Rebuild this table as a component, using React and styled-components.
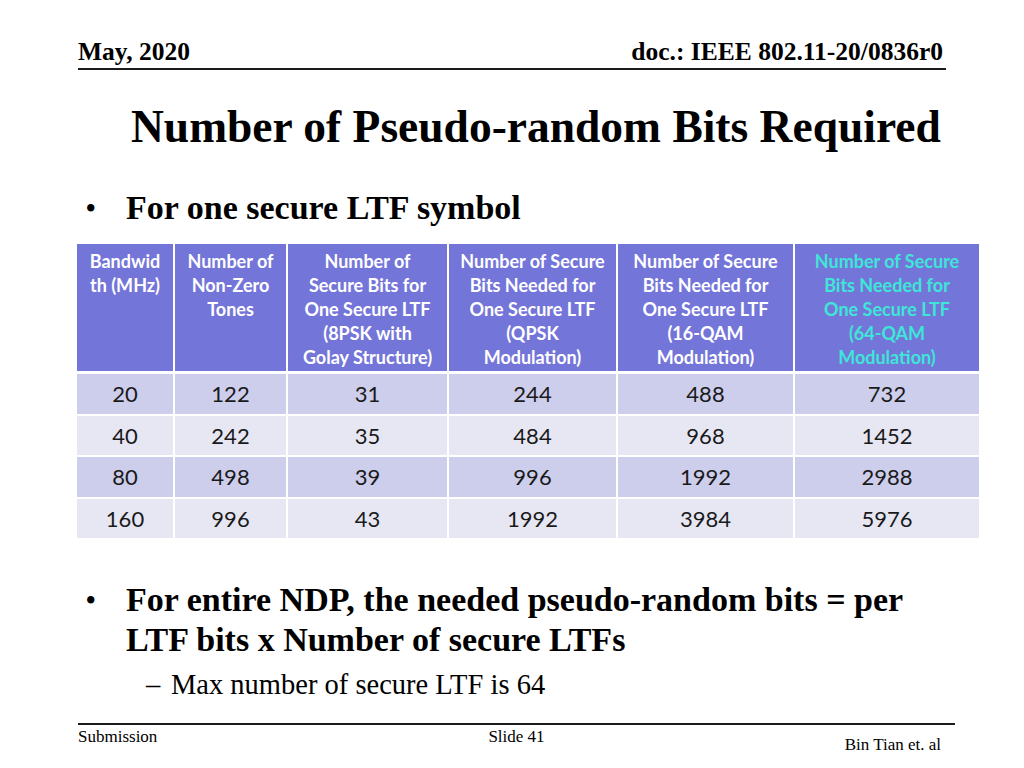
import styled, { createGlobalStyle } from 'styled-components';

const GlobalStyle = createGlobalStyle`
  html, body {
    margin: 0;
    padding: 0;
    background: #ffffff;
  }
`;

// header lines are broken by hand, as on the slide
const headers = [
  ['Bandwid', 'th (MHz)'],
  ['Number of', 'Non-Zero', 'Tones'],
  ['Number of', 'Secure Bits for', 'One Secure LTF', '(8PSK with', 'Golay Structure)'],
  ['Number of Secure', 'Bits Needed for', 'One Secure LTF', '(QPSK', 'Modulation)'],
  ['Number of Secure', 'Bits Needed for', 'One Secure LTF', '(16-QAM', 'Modulation)'],
  ['Number of Secure', 'Bits Needed for', 'One Secure LTF', '(64-QAM', 'Modulation)'],
];

const rows = [
  ['20', '122', '31', '244', '488', '732'],
  ['40', '242', '35', '484', '968', '1452'],
  ['80', '498', '39', '996', '1992', '2988'],
  ['160', '996', '43', '1992', '3984', '5976'],
];

const colWidths = [97, 113, 161, 169, 177, 185];

export default function App() {
  return (
    <>
      <GlobalStyle />
      <Slide>
        <Header>
          <HeaderText>May, 2020</HeaderText>
          <HeaderText>doc.: IEEE 802.11-20/0836r0</HeaderText>
        </Header>

        <Title>Number of Pseudo-random Bits Required</Title>

        <Bullet $top={33}>
          <Dot>•</Dot>
          <span>For one secure LTF symbol</span>
        </Bullet>

        <Table>
          <colgroup>
            {colWidths.map((w, i) => (
              <col key={i} style={{ width: w }} />
            ))}
          </colgroup>
          <thead>
            <tr>
              {headers.map((h, i) => (
                <Th key={i} $highlight={i === 5}>
                  {h.map((line, k) => (
                    <HeadLine key={k}>{line}</HeadLine>
                  ))}
                </Th>
              ))}
            </tr>
          </thead>
          <tbody>
            {rows.map((r, i) => (
              <tr key={i}>
                {r.map((c, j) => (
                  <Td key={j} $odd={i % 2 === 0}>{c}</Td>
                ))}
              </tr>
            ))}
          </tbody>
        </Table>

        <Bullet $top={40}>
          <Dot>•</Dot>
          <span>For entire NDP, the needed pseudo-random bits = per<br />LTF bits x Number of secure LTFs</span>
        </Bullet>
        <SubBullet>
          <Dash>–</Dash>
          <span>Max number of secure LTF is 64</span>
        </SubBullet>

        <Footer>
          <FooterText>Submission</FooterText>
          <FooterText>Slide 41</FooterText>
          <FooterRight>Bin Tian et. al</FooterRight>
        </Footer>
      </Slide>
    </>
  );
}

const Slide = styled.div`
  width: 1024px;
  height: 768px;
  overflow: hidden;
  font-family: 'Liberation Serif', 'Times New Roman', serif;
  color: #000000;
  display: flex;
  flex-direction: column;
`;

const Header = styled.div`
  margin: 37px 78px 0 78px;
  display: flex;
  justify-content: space-between;
  align-items: flex-end;
  border-bottom: 2px solid #1a1a1a;
  padding-bottom: 1px;
`;

const HeaderText = styled.div`
  font-size: 25.5px;
  font-weight: 700;
  line-height: 30px;
  padding-right: 3px;
`;

const Title = styled.h1`
  margin: 29px 0 0 0;
  padding-left: 131px;
  font-size: 45.5px;
  font-weight: 700;
  line-height: 56px;
`;

const Bullet = styled.div`
  margin: ${p => p.$top}px 60px 0 86px;
  display: flex;
  font-size: 34px;
  font-weight: 700;
  line-height: 40px;
`;

const Dot = styled.span`
  width: 40px;
  flex: none;
  font-size: 27px;
`;

const SubBullet = styled.div`
  margin: 8px 0 0 146px;
  display: flex;
  font-size: 28.5px;
  line-height: 34px;
`;

const Dash = styled.span`
  width: 25px;
  flex: none;
`;

const Table = styled.table`
  margin: 16px 0 0 77px;
  width: 902px;
  border-collapse: collapse;
  table-layout: fixed;
  font-family: Lato, 'Open Sans', sans-serif;
`;

const Th = styled.th`
  background: #7475d9;
  color: ${p => (p.$highlight ? '#3ee6d6' : '#ffffff')};
  font-size: 18px;
  font-weight: 700;
  line-height: 24px;
  height: 122px;
  vertical-align: top;
  padding: 5px 0 0 0;
  text-align: center;
  border: 2px solid #ffffff;
  border-top: none;
  border-bottom-width: 3px;
  &:first-child { border-left: none; }
  &:last-child { border-right: none; }
`;

const HeadLine = styled.div`
  white-space: nowrap;
`;

const Td = styled.td`
  background: ${p => (p.$odd ? '#cdcdec' : '#e7e7f4')};
  color: #1a1a1a;
  font-size: 22px;
  text-align: center;
  height: 39.5px;
  padding: 0;
  border: 2px solid #ffffff;
  &:first-child { border-left: none; }
  &:last-child { border-right: none; }
`;

const Footer = styled.div`
  margin: auto 69px 0 78px;
  border-top: 2px solid #1a1a1a;
  height: 41px;
  display: grid;
  grid-template-columns: 1fr auto 1fr;
  font-size: 17px;
  padding-top: 2px;
`;

const FooterText = styled.div`
  line-height: 20px;
`;

const FooterRight = styled.div`
  justify-self: end;
  margin-top: 8px;
  margin-right: 14px;
  line-height: 20px;
`;
